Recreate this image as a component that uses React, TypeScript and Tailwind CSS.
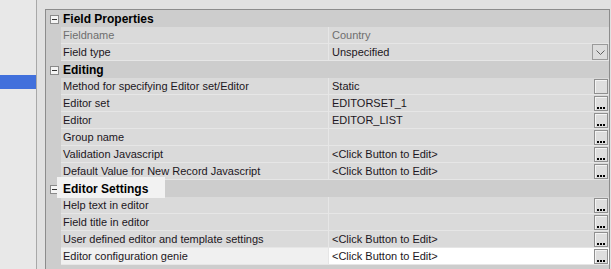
import React from 'react';

type Row =
  | { kind: 'cat'; label: string; focus?: boolean }
  | { kind: 'prop'; name: string; value?: string; muted?: boolean; btn?: 'dots' | 'drop' | 'blank'; selected?: boolean };

const rows: Row[] = [
  { kind: 'cat', label: 'Field Properties' },
  { kind: 'prop', name: 'Fieldname', value: 'Country', muted: true },
  { kind: 'prop', name: 'Field type', value: 'Unspecified', btn: 'drop' },
  { kind: 'cat', label: 'Editing' },
  { kind: 'prop', name: 'Method for specifying Editor set/Editor', value: 'Static', btn: 'blank' },
  { kind: 'prop', name: 'Editor set', value: 'EDITORSET_1', btn: 'dots' },
  { kind: 'prop', name: 'Editor', value: 'EDITOR_LIST', btn: 'dots' },
  { kind: 'prop', name: 'Group name', value: '', btn: 'dots' },
  { kind: 'prop', name: 'Validation Javascript', value: '<Click Button to Edit>', btn: 'dots' },
  { kind: 'prop', name: 'Default Value for New Record Javascript', value: '<Click Button to Edit>', btn: 'dots' },
  { kind: 'cat', label: 'Editor Settings', focus: true },
  { kind: 'prop', name: 'Help text in editor', value: '', btn: 'dots' },
  { kind: 'prop', name: 'Field title in editor', value: '', btn: 'dots' },
  { kind: 'prop', name: 'User defined editor and template settings', value: '<Click Button to Edit>', btn: 'dots' },
  { kind: 'prop', name: 'Editor configuration genie', value: '<Click Button to Edit>', btn: 'dots', selected: true },
];

const MinusBox = () => (
  <div className="w-[9px] h-[9px] border border-[#8a8a8a] bg-[#f4f4f4] flex items-center justify-center">
    <div className="w-[5px] h-px bg-[#333]" />
  </div>
);

const RowButton = ({ kind }: { kind: 'dots' | 'drop' | 'blank' }) => {
  if (kind === 'drop') {
    return (
      <div className="w-[16px] h-[16px] border border-[#9a9a9a] bg-[#dcdcdc] flex items-center justify-center">
        <svg width="9" height="5" viewBox="0 0 9 5">
          <path d="M0.5 0.5 L4.5 4.5 L8.5 0.5" fill="none" stroke="#606060" strokeWidth="1" />
        </svg>
      </div>
    );
  }
  return (
    <div className="w-[14px] h-[15px] border border-[#8f8f8f] bg-[#dedede] flex items-end justify-center pb-[1px] shadow-[inset_1px_1px_0_#f4f4f4]">
      {kind === 'dots' && (
        <div className="flex gap-[1px]">
          <div className="w-[2px] h-[2px] bg-black" />
          <div className="w-[2px] h-[2px] bg-black" />
          <div className="w-[2px] h-[2px] bg-black" />
        </div>
      )}
    </div>
  );
};

export default function App() {
  return (
    <div
      className="w-[611px] h-[269px] overflow-hidden bg-[#e1e1e1] flex text-[11px] text-[#1c1622]"
      style={{ fontFamily: '"Liberation Sans", Arial, sans-serif' }}
    >
      {/* left tree panel */}
      <div className="w-[37px] shrink-0 bg-[#e8e8e8] border-r border-[#a8a8a8] pt-[75px]">
        <div className="h-[14px] bg-[#4170dc]" />
      </div>

      {/* property grid */}
      <div className="ml-[8px] mt-[9px] w-[565px] shrink-0 border-l border-t border-r border-[#8c8c8c] bg-[#cdcdcd] flex flex-col">
        {rows.map((r, i) =>
          r.kind === 'cat' ? (
            <div key={i} className="h-[17px] shrink-0 flex items-center pt-px">
              <div className="w-[15px] shrink-0 flex items-center justify-center pl-[2px]">
                <MinusBox />
              </div>
              <div className="relative pl-[2px]">
                {r.focus && <div className="absolute left-[-4px] top-[-3px] w-[108px] h-[21px] bg-[#f2f2f2]" />}
                <span className="relative font-bold text-[12px] text-black">{r.label}</span>
              </div>
            </div>
          ) : (
            <div key={i} className="h-[17px] shrink-0 flex">
              <div className="w-[15px] shrink-0 bg-[#cdcdcd]" />
              <div
                className={`w-[268px] shrink-0 border-b border-r border-[#e6e6e6] flex items-center pl-[2px] pt-px whitespace-nowrap overflow-hidden ${
                  r.selected ? 'bg-[#f0f0f0]' : 'bg-[#dadada]'
                } ${r.muted ? 'text-[#6e6e6e]' : ''}`}
              >
                {r.name}
              </div>
              <div
                className={`flex-1 border-b border-[#e6e6e6] flex items-center justify-between pl-[3px] pr-[1px] ${
                  r.selected ? 'bg-white' : 'bg-[#dadada]'
                } ${r.muted ? 'text-[#6e6e6e]' : ''}`}
              >
                <span className="pt-px">{r.value}</span>
                {r.btn && <RowButton kind={r.btn} />}
              </div>
            </div>
          )
        )}
      </div>
    </div>
  );
}
